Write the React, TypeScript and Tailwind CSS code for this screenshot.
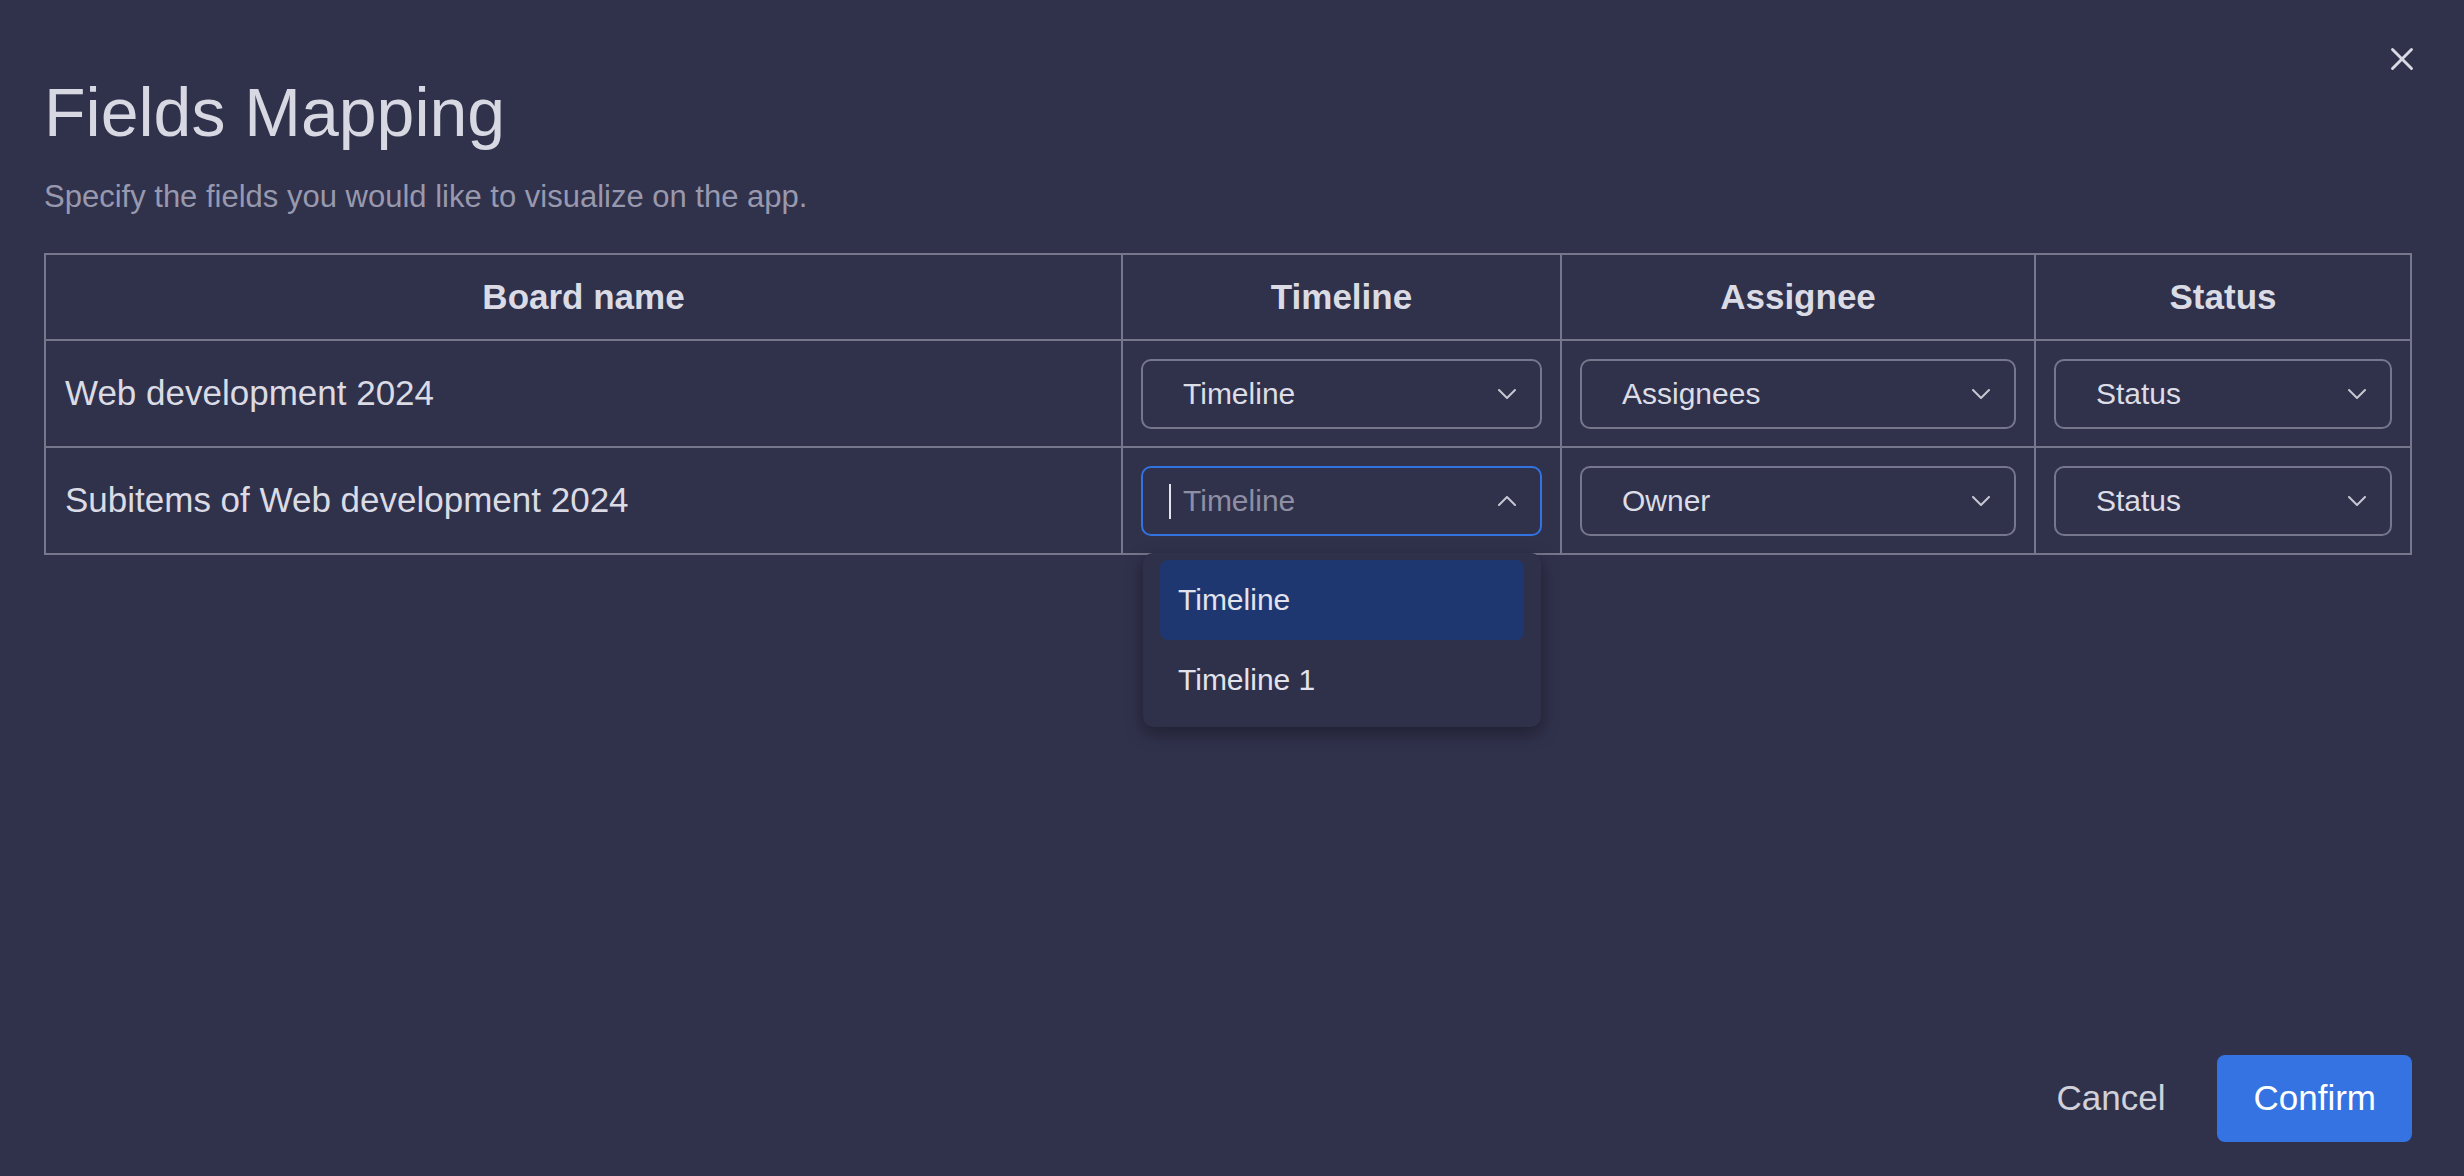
const COLUMNS = ['Board name', 'Timeline', 'Assignee', 'Status'];

const ROWS = [
  { board: 'Web development 2024', timeline: 'Timeline', assignee: 'Assignees', status: 'Status', open: false },
  { board: 'Subitems of Web development 2024', timeline: 'Timeline', assignee: 'Owner', status: 'Status', open: true },
];

const OPTIONS = ['Timeline', 'Timeline 1'];

function Chevron({ up = false }: { up?: boolean }) {
  return (
    <svg width="18" height="10" viewBox="0 0 18 10" fill="none" className="shrink-0">
      <path
        d={up ? 'M1 9l8-8 8 8' : 'M1 1l8 8 8-8'}
        stroke="#c6c7d3"
        strokeWidth="2"
        strokeLinecap="round"
        strokeLinejoin="round"
      />
    </svg>
  );
}

function Select({ value, open = false }: { value: string; open?: boolean }) {
  return (
    <div className="relative">
      <div
        className={`relative flex h-[70px] items-center justify-between rounded-[10px] border-2 pl-[40px] pr-[24px] text-[30px] ${
          open ? 'border-[#3273e0] text-[#8e8fa4]' : 'border-[#76778d] text-[#dcdde6]'
        }`}
      >
        {open && <span className="absolute left-[26px] top-[16px] h-[35px] w-[2px] bg-[#e3e4ec]" />}
        <span className="leading-none">{value}</span>
        <Chevron up={open} />
      </div>

      {open && (
        <div className="absolute left-[2px] top-[87px] z-10 w-[398px] rounded-[10px] bg-[#2f3049] px-[17px] py-[7px] shadow-[0_6px_18px_rgba(0,0,0,0.35)]">
          {OPTIONS.map((option, index) => (
            <div
              key={option}
              className={`flex h-[80px] items-center rounded-[8px] pl-[18px] text-[30px] text-[#e2e3ec] ${
                index === 0 ? 'bg-[#1e3770]' : ''
              }`}
            >
              {option}
            </div>
          ))}
        </div>
      )}
    </div>
  );
}

export default function App() {
  return (
    <div className="relative flex h-[1176px] w-[2464px] flex-col overflow-hidden bg-[#30314b] pl-[44px] pr-[52px] font-['Liberation_Sans',Arial,sans-serif]">
      <button className="absolute right-[43px] top-[40px]" aria-label="Close">
        <svg width="38" height="38" viewBox="0 0 24 24" fill="none" stroke="#d9dae4" strokeWidth="1.8" strokeLinecap="round">
          <path d="M18 6 6 18" />
          <path d="m6 6 12 12" />
        </svg>
      </button>

      <h1 className="mt-[78px] text-[68px] font-normal leading-none text-[#d7d8e2]">Fields Mapping</h1>
      <p className="mt-[35px] text-[31px] leading-none text-[#9899ae]">
        Specify the fields you would like to visualize on the app.
      </p>

      <div className="mt-[41px] grid grid-cols-[1077px_439px_474px_376px] border-l-2 border-t-2 border-[#76778d]">
        {COLUMNS.map((col) => (
          <div
            key={col}
            className="flex h-[86px] items-center justify-center border-b-2 border-r-2 border-[#76778d] text-[35px] font-bold text-[#dadbe4]"
          >
            {col}
          </div>
        ))}

        {ROWS.map((row) => (
          <div key={row.board} className="contents">
            <div className="flex h-[107px] items-center border-b-2 border-r-2 border-[#76778d] px-[19px] text-[35px] text-[#dadbe4]">
              {row.board}
            </div>
            <div className="relative flex h-[107px] flex-col justify-center border-b-2 border-r-2 border-[#76778d] px-[18px]">
              <Select value={row.timeline} open={row.open} />
            </div>
            <div className="flex h-[107px] flex-col justify-center border-b-2 border-r-2 border-[#76778d] px-[18px]">
              <Select value={row.assignee} />
            </div>
            <div className="flex h-[107px] flex-col justify-center border-b-2 border-r-2 border-[#76778d] px-[18px]">
              <Select value={row.status} />
            </div>
          </div>
        ))}
      </div>

      <div className="mt-auto flex justify-end gap-[16px] pb-[34px]">
        <button className="h-[87px] px-[36px] text-[35px] text-[#d0d1db]">Cancel</button>
        <button className="h-[87px] rounded-[8px] bg-[#3473e1] px-[36px] text-[35px] text-white">Confirm</button>
      </div>
    </div>
  );
}
